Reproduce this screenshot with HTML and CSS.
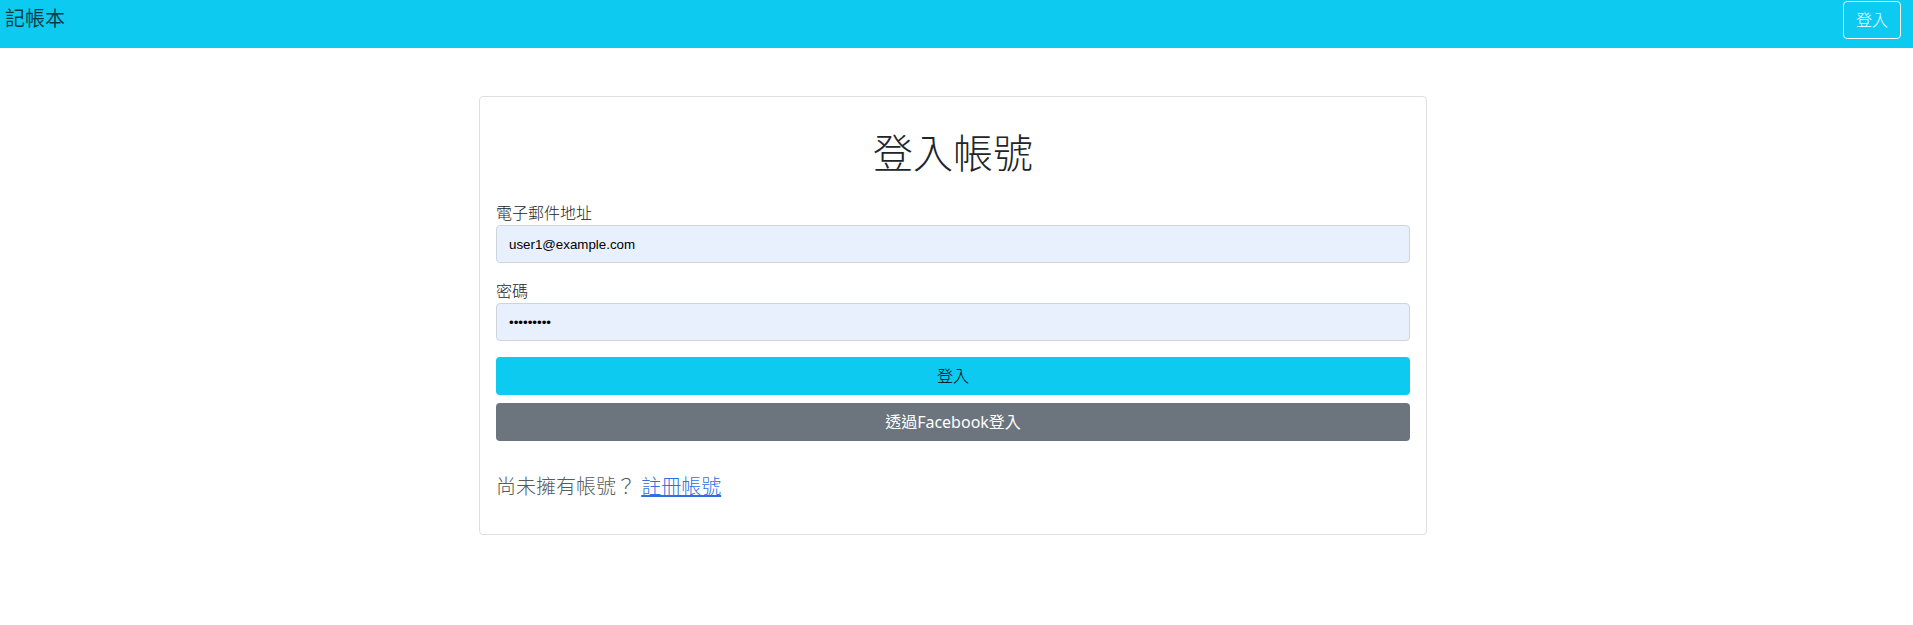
FILE: index.html
```html
<!DOCTYPE html>
<html lang="zh-Hant">
<head>
<meta charset="utf-8">
<title>記帳本</title>
<link rel="stylesheet" href="styles.css">
</head>
<body>
<nav class="navbar">
  <a class="brand" href="#">記帳本</a>
  <button class="nav-btn" type="button">登入</button>
</nav>
<main class="page">
  <div class="card">
    <h1 class="title">登入帳號</h1>
    <form class="form">
      <div class="group">
        <label class="label" for="email">電子郵件地址</label>
        <input class="control" id="email" type="email" value="user1@example.com">
      </div>
      <div class="group">
        <label class="label" for="password">密碼</label>
        <input class="control" id="password" type="password" value="123456789">
      </div>
      <button class="btn btn-info" type="button">登入</button>
      <button class="btn btn-secondary" type="button">透過Facebook登入</button>
    </form>
    <p class="signup">尚未擁有帳號？ <a class="link" href="#">註冊帳號</a></p>
  </div>
</main>
</body>
</html>
```

FILE: styles.css
```css
* { box-sizing: border-box; }

body {
  margin: 0;
  font-family: "Noto Sans", "Noto Sans CJK TC", sans-serif;
  color: #212529;
  background: #fff;
}

.navbar {
  height: 48px;
  background: #0dcaf0;
  display: flex;
  justify-content: space-between;
  align-items: flex-start;
  padding: 0 12px 0 5px;
}

.brand {
  margin-top: 4px;
  font-size: 20px;
  line-height: 30px;
  color: rgba(0, 0, 0, 0.72);
  text-decoration: none;
}

.nav-btn {
  margin-top: 1px;
  height: 38px;
  padding: 0 12px;
  border: 1px solid #f8f9fa;
  border-radius: 4px;
  background: transparent;
  color: #fff;
  font-family: inherit;
  font-size: 16px;
  font-weight: 300;
  line-height: 36px;
}

.page {
  display: grid;
  grid-template-columns: 479px 948px 1fr;
  padding-top: 48px;
}

.card {
  grid-column: 2;
  border: 1px solid rgba(0, 0, 0, 0.125);
  border-radius: 4px;
  padding: 16px;
}

.title {
  margin: 16px 0 24px;
  font-size: 40px;
  line-height: 48px;
  font-weight: 300;
  text-align: center;
}

.form {
  display: flex;
  flex-direction: column;
}

.group {
  display: flex;
  flex-direction: column;
  margin-bottom: 16px;
}

.label {
  font-size: 16px;
  line-height: 24px;
  font-weight: 300;
}

.control {
  height: 38px;
  padding: 6px 12px;
  border: 1px solid #ced4da;
  border-radius: 4px;
  background: #e8f0fe;
  color: #000;
  font-family: "Liberation Sans", Arial, sans-serif;
  font-size: 13.33px;
  outline: none;
}

.btn {
  height: 38px;
  border: 0;
  border-radius: 4px;
  font-family: inherit;
  font-size: 16px;
  font-weight: 300;
  line-height: 38px;
  padding: 0 12px;
}

.btn-info {
  background: #0dcaf0;
  color: #000;
}

.btn-secondary {
  margin-top: 8px;
  background: #6c757d;
  color: #fff;
  font-weight: 400;
}

.signup {
  margin: 31px 0 16px;
  font-size: 20px;
  line-height: 30px;
  font-weight: 300;
  color: #555b60;
}

.link {
  color: #2f6fe0;
  text-decoration: underline;
}
```
